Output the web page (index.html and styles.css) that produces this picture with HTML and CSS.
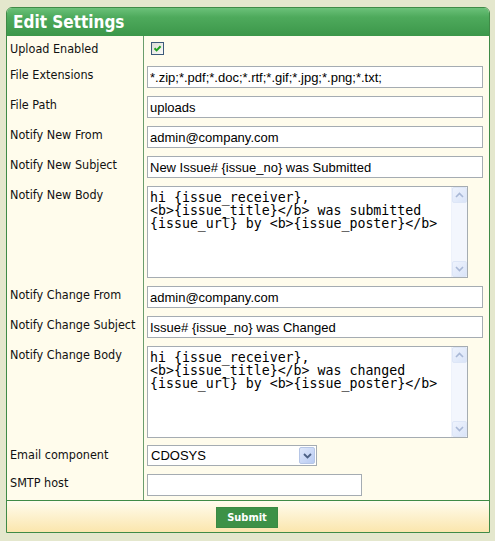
FILE: index.html
```html
<!DOCTYPE html>
<html>
<head>
<meta charset="utf-8">
<title>Edit Settings</title>
<link rel="stylesheet" href="styles.css">
</head>
<body>
<div class="panel">
  <div class="header">Edit Settings</div>
  <div class="form">
    <div class="row">
      <label class="lbl">Upload Enabled</label>
      <div class="fld fld-check">
        <span class="check" role="checkbox" aria-checked="true"><svg width="11" height="11" viewBox="0 0 11 11"><path d="M2.5 5.2 L4.6 7.4 L8.6 3.2" fill="none" stroke="#21a121" stroke-width="2"/></svg></span>
      </div>
    </div>
    <div class="row">
      <label class="lbl">File Extensions</label>
      <div class="fld"><input class="txt" type="text" value="*.zip;*.pdf;*.doc;*.rtf;*.gif;*.jpg;*.png;*.txt;"></div>
    </div>
    <div class="row">
      <label class="lbl">File Path</label>
      <div class="fld"><input class="txt" type="text" value="uploads"></div>
    </div>
    <div class="row">
      <label class="lbl">Notify New From</label>
      <div class="fld"><input class="txt" type="text" value="admin@company.com"></div>
    </div>
    <div class="row">
      <label class="lbl">Notify New Subject</label>
      <div class="fld"><input class="txt" type="text" value="New Issue# {issue_no} was Submitted"></div>
    </div>
    <div class="row">
      <label class="lbl">Notify New Body</label>
      <div class="fld">
        <div class="area">
          <textarea class="ta">hi {issue_receiver},
&lt;b&gt;{issue_title}&lt;/b&gt; was submitted
{issue_url} by &lt;b&gt;{issue_poster}&lt;/b&gt;</textarea>
          <div class="sb">
            <span class="sbbtn"><svg width="9" height="6" viewBox="0 0 9 6"><path d="M1 5 L4.5 1.5 L8 5" fill="none" stroke="#a9b8d6" stroke-width="1.6"/></svg></span>
            <span class="sbtrack"></span>
            <span class="sbbtn"><svg width="9" height="6" viewBox="0 0 9 6"><path d="M1 1 L4.5 4.5 L8 1" fill="none" stroke="#a9b8d6" stroke-width="1.6"/></svg></span>
          </div>
        </div>
      </div>
    </div>
    <div class="row">
      <label class="lbl">Notify Change From</label>
      <div class="fld"><input class="txt" type="text" value="admin@company.com"></div>
    </div>
    <div class="row">
      <label class="lbl">Notify Change Subject</label>
      <div class="fld"><input class="txt" type="text" value="Issue# {issue_no} was Changed"></div>
    </div>
    <div class="row">
      <label class="lbl">Notify Change Body</label>
      <div class="fld">
        <div class="area">
          <textarea class="ta">hi {issue_receiver},
&lt;b&gt;{issue_title}&lt;/b&gt; was changed
{issue_url} by &lt;b&gt;{issue_poster}&lt;/b&gt;</textarea>
          <div class="sb">
            <span class="sbbtn"><svg width="9" height="6" viewBox="0 0 9 6"><path d="M1 5 L4.5 1.5 L8 5" fill="none" stroke="#a9b8d6" stroke-width="1.6"/></svg></span>
            <span class="sbtrack"></span>
            <span class="sbbtn"><svg width="9" height="6" viewBox="0 0 9 6"><path d="M1 1 L4.5 4.5 L8 1" fill="none" stroke="#a9b8d6" stroke-width="1.6"/></svg></span>
          </div>
        </div>
      </div>
    </div>
    <div class="row">
      <label class="lbl">Email component</label>
      <div class="fld fld-sel">
        <div class="sel">
          <select class="selinner"><option>CDOSYS</option></select>
          <span class="dd"><svg width="9" height="6" viewBox="0 0 9 6"><path d="M1 1 L4.5 4.5 L8 1" fill="none" stroke="#4d6185" stroke-width="1.8"/></svg></span>
        </div>
      </div>
    </div>
    <div class="row">
      <label class="lbl">SMTP host</label>
      <div class="fld"><input class="txt txt-short" type="text" value=""></div>
    </div>
  </div>
  <div class="footer"><button class="submit" type="button">Submit</button></div>
</div>
</body>
</html>
```

FILE: styles.css
```css
html, body {
  margin: 0;
  padding: 0;
  background: #e4e7cd;
}
body {
  font-family: "DejaVu Sans Condensed", "DejaVu Sans", sans-serif;
  color: #000;
}
.panel {
  margin: 7px 0 0 6px;
  width: 484px;
  box-sizing: border-box;
  border: 1px solid #3f8a46;
  border-radius: 6px 6px 0 0;
  background: #fffcec;
  overflow: hidden;
}
.header {
  height: 28px;
  line-height: 28px;
  padding-left: 6px;
  margin-top: -1px;
  padding-top: 1px;
  font-size: 17px;
  font-weight: bold;
  color: #fff;
  background: linear-gradient(#6ec37c 0%, #4eaa5c 35%, #3c974a 100%);
}
.row {
  display: grid;
  grid-template-columns: 137px 1fr;
}
.lbl {
  box-sizing: border-box;
  border-right: 1px solid #6a9d6c;
  padding: 4.5px 3px 3.5px;
  font-size: 12.5px;
  line-height: 15px;
  color: #111;
}
.fld {
  padding: 4px 0 4px 3px;
}
.fld-check {
  padding: 6px 0 7px 7px;
}
.fld-sel {
  padding: 3px 0 4px 3px;
}
.check {
  display: flex;
  align-items: center;
  justify-content: center;
  width: 13px;
  height: 13px;
  box-sizing: border-box;
  border: 1px solid #3c5a7a;
  background: linear-gradient(135deg, #dcdcd4, #fbfbf9);
}
.txt {
  display: block;
  width: 336px;
  height: 22px;
  box-sizing: border-box;
  margin: 0;
  border: 1px solid #a5acb2;
  padding: 0 2px;
  background: #fff;
  font-family: "Liberation Sans", Arial, sans-serif;
  font-size: 13px;
  color: #000;
  outline: none;
}
.txt-short {
  width: 215px;
}
.area {
  display: flex;
  width: 321px;
  height: 92px;
  box-sizing: border-box;
  border: 1px solid #a5acb2;
  background: #fff;
}
.ta {
  flex: 1;
  min-width: 0;
  margin: 0;
  border: 0;
  padding: 4px 2px 2px;
  resize: none;
  overflow: hidden;
  outline: none;
  background: transparent;
  font-family: "DejaVu Sans Mono", monospace;
  font-size: 13.25px;
  line-height: 13px;
  color: #000;
  white-space: pre;
}
.sb {
  width: 15px;
  display: flex;
  flex-direction: column;
  background: #f3f6fd;
  border-left: 1px solid #eef2fb;
}
.sbbtn {
  height: 16px;
  display: flex;
  align-items: center;
  justify-content: center;
  box-sizing: border-box;
  border: 1px solid #dde6f7;
  border-radius: 2px;
  background: linear-gradient(135deg, #eef3fd, #dae4f8);
}
.sbtrack {
  flex: 1;
}
.sel {
  display: flex;
  width: 170px;
  height: 21px;
  box-sizing: border-box;
  border: 1px solid #a5acb2;
  background: #fff;
}
.selinner {
  flex: 1;
  min-width: 0;
  -webkit-appearance: none;
  appearance: none;
  border: 0;
  margin: 0;
  padding: 0 0 0 3px;
  background: transparent;
  font-family: "Liberation Sans", Arial, sans-serif;
  font-size: 13px;
  color: #000;
  outline: none;
}
.dd {
  width: 16px;
  margin: 1px;
  display: flex;
  align-items: center;
  justify-content: center;
  box-sizing: border-box;
  border: 1px solid #b6c6e6;
  border-radius: 2px;
  background: linear-gradient(135deg, #dfe8fb, #b9cbf2);
}
.footer {
  border-top: 1px solid #3f8a46;
  height: 32px;
  box-sizing: border-box;
  padding-top: 6px;
  display: flex;
  justify-content: center;
  background: linear-gradient(#fffcee, #fbe6ad);
}
.submit {
  width: 62px;
  height: 21px;
  margin: 0 0 0 -2px;
  padding: 0;
  border: 1px solid #3a8a43;
  background: #3d9147;
  color: #fff;
  font-family: "DejaVu Sans Condensed", "DejaVu Sans", sans-serif;
  font-size: 11px;
  font-weight: bold;
}
```
